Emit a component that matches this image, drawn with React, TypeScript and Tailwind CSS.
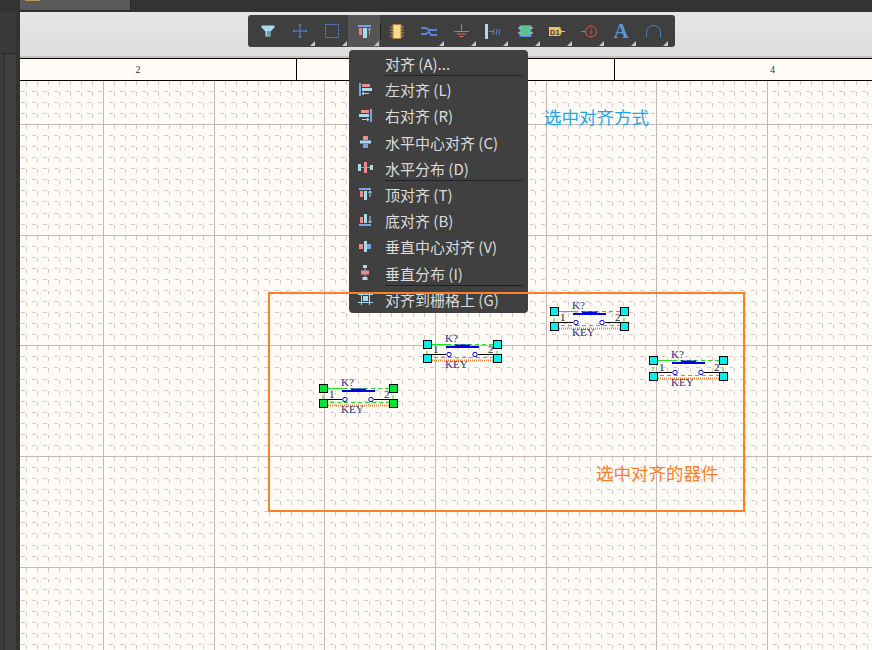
import React from 'react';

const FONT = { fontFamily: '"Noto Sans CJK SC", "Liberation Sans", sans-serif' };

const Corner = () => (
  <span className="absolute right-[1px] bottom-[1px] w-0 h-0 border-l-[5px] border-l-transparent border-b-[5px] border-b-[#c8c8c8]" />
);

const paletteIcons: { icon: React.ReactNode; corner: boolean; active?: boolean }[] = [
  {
    corner: false,
    icon: (
      <svg width="14" height="12" viewBox="0 0 14 12">
        <path d="M0.5 0.5h13v2l-4 4v5h-5v-5l-4-4z" fill="#a8dcec" />
        <path d="M6 6h3v5H6z" fill="#5f9db5" />
      </svg>
    ),
  },
  {
    corner: true,
    icon: (
      <svg width="14" height="14" viewBox="0 0 14 14">
        <path d="M7 0v14M0 7h14" stroke="#5b84d8" strokeWidth="1" fill="none" />
        <path d="M5.5 1h3M5.5 13h3M1 5.500v3M13 5.500v3" stroke="#5b84d8" strokeWidth="1" fill="none" />
      </svg>
    ),
  },
  {
    corner: true,
    icon: (
      <svg width="14" height="14" viewBox="0 0 14 14">
        <rect x="0.5" y="0.5" width="13" height="13" fill="none" stroke="#5b84d8" strokeDasharray="2 1" />
      </svg>
    ),
  },
  {
    corner: true,
    active: true,
    icon: (
      <svg width="13" height="13" viewBox="0 0 13 13">
        <path d="M0 0h13v2H0z" fill="#79a6e0" />
        <path d="M1 3h3v7H1z" fill="#ef7f7f" />
        <path d="M5 3h4v10H5z" fill="#a8dcec" />
        <path d="M11.500 3v7M10 5l1.500-2 1.500 2" stroke="#79a6e0" fill="none" />
      </svg>
    ),
  },
  {
    corner: false,
    icon: (
      <svg width="14" height="15" viewBox="0 0 14 15">
        <rect x="3" y="0.5" width="8" height="14" fill="#fbd98c" stroke="#a6843f" />
        <path d="M0 3h3M0 6h3M0 9h3M0 12h3M11 3h3M11 6h3M11 9h3M11 12h3" stroke="#b59a55" />
      </svg>
    ),
  },
  {
    corner: true,
    icon: (
      <svg width="16" height="11" viewBox="0 0 16 11">
        <path d="M0 2h5l3 2h8M0 8h5l3-2 2 3h6" stroke="#5b84d8" strokeWidth="2" fill="none" />
      </svg>
    ),
  },
  {
    corner: true,
    icon: (
      <svg width="15" height="14" viewBox="0 0 15 14">
        <path d="M7.500 0v7M0 7.500h15M3 10h9M5.500 12.500h4" stroke="#dc6a60" fill="none" />
      </svg>
    ),
  },
  {
    corner: true,
    icon: (
      <svg width="16" height="15" viewBox="0 0 16 15">
        <rect x="0" y="0" width="3" height="15" fill="#a8dcec" />
        <path d="M4 7.500h4M8 11l1-6M11 11l1-6M14 11l1-6" stroke="#5b84d8" fill="none" />
      </svg>
    ),
  },
  {
    corner: true,
    icon: (
      <svg width="15" height="12" viewBox="0 0 15 12">
        <rect x="2" y="0.500" width="11" height="11" fill="#5ec48a" stroke="#5b84d8" />
        <path d="M0 3h3M0 8h3M12 3h3M12 8h3" stroke="#cfe7f5" />
      </svg>
    ),
  },
  {
    corner: true,
    icon: (
      <svg width="16" height="9" viewBox="0 0 16 9">
        <path d="M0 0h11l2 4.500-2 4.500H0z" fill="#e6c25f" />
        <path d="M12 4.500h4" stroke="#e6c25f" />
        <text x="1" y="7.500" fontSize="7.500" fontWeight="bold" fill="#3d3d3d" style={{ fontFamily: '"Liberation Sans", sans-serif' }}>D1</text>
      </svg>
    ),
  },
  {
    corner: true,
    icon: (
      <svg width="16" height="13" viewBox="0 0 16 13">
        <circle cx="10" cy="6.500" r="5.500" fill="none" stroke="#dc5a5a" />
        <path d="M0 6.500h4M10 3v1M10 5.500v4" stroke="#dc5a5a" fill="none" />
      </svg>
    ),
  },
  {
    corner: true,
    icon: (
      <span className="text-[21px] leading-none font-bold text-[#5c95dc]" style={{ fontFamily: '"Liberation Serif", serif' }}>
        A
      </span>
    ),
  },
  {
    corner: true,
    icon: (
      <svg width="15" height="12" viewBox="0 0 15 12">
        <path d="M0.500 12V7.500a7 7 0 0 1 14 0V12" fill="none" stroke="#4c7fc0" />
      </svg>
    ),
  },
];

const AlignIcon = ({ name }: { name: string }) => {
  const blue = '#79a6e0';
  const pink = '#ef8a8a';
  const cyan = '#a8dcec';
  switch (name) {
    case 'left':
      return (
        <svg width="13" height="13" viewBox="0 0 13 13">
          <rect x="0" y="0" width="2" height="13" fill={blue} />
          <rect x="3" y="1" width="8" height="3" fill={pink} />
          <rect x="3" y="5" width="10" height="3" fill={cyan} />
          <path d="M3 10.500h7M5 9l-2 1.500 2 1.500" stroke={cyan} fill="none" />
        </svg>
      );
    case 'right':
      return (
        <svg width="13" height="13" viewBox="0 0 13 13">
          <rect x="11" y="0" width="2" height="13" fill={blue} />
          <rect x="2" y="1" width="8" height="3" fill={pink} />
          <rect x="0" y="5" width="10" height="3" fill={cyan} />
          <path d="M3 10.500h7M8 9l2 1.500-2 1.500" stroke={cyan} fill="none" />
        </svg>
      );
    case 'hcenter':
      return (
        <svg width="11" height="12" viewBox="0 0 11 12">
          <rect x="3" y="0" width="5" height="4" fill={pink} />
          <rect x="0" y="4.500" width="11" height="3" fill={cyan} />
          <rect x="3" y="8" width="5" height="4" fill={blue} />
        </svg>
      );
    case 'hdist':
      return (
        <svg width="15" height="11" viewBox="0 0 15 11">
          <rect x="0" y="2" width="3" height="7" fill={cyan} />
          <rect x="6" y="0" width="3" height="11" fill={pink} />
          <rect x="12" y="3" width="3" height="5" fill={cyan} />
          <path d="M3 5.500h3M9 5.500h3" stroke={blue} />
        </svg>
      );
    case 'top':
      return (
        <svg width="13" height="12" viewBox="0 0 13 12">
          <rect x="0" y="0" width="12" height="2" fill={blue} />
          <rect x="1" y="3" width="3" height="6" fill={pink} />
          <rect x="5" y="3" width="3" height="9" fill={cyan} />
          <path d="M11 3v6M9.500 5l1.500-2 1.500 2" stroke={cyan} fill="none" />
        </svg>
      );
    case 'bottom':
      return (
        <svg width="13" height="12" viewBox="0 0 13 12">
          <rect x="0" y="10" width="12" height="2" fill={blue} />
          <rect x="1" y="3" width="3" height="6" fill={pink} />
          <rect x="5" y="0" width="3" height="9" fill={cyan} />
          <path d="M11 2v7M9.500 7l1.500 2 1.500-2" stroke={cyan} fill="none" />
        </svg>
      );
    case 'vcenter':
      return (
        <svg width="12" height="11" viewBox="0 0 12 11">
          <rect x="0" y="3" width="4" height="5" fill={pink} />
          <rect x="5" y="0" width="3" height="11" fill={cyan} />
          <rect x="8" y="3" width="4" height="5" fill={blue} />
        </svg>
      );
    case 'vdist':
      return (
        <svg width="8" height="15" viewBox="0 0 8 15">
          <rect x="2" y="0" width="4" height="3" fill={cyan} />
          <rect x="0" y="5.500" width="8" height="4" fill={pink} />
          <rect x="1.500" y="12" width="5" height="3" fill={cyan} />
          <path d="M4 3v3M4 9v3" stroke={blue} />
        </svg>
      );
    case 'grid':
      return (
        <svg width="15" height="13" viewBox="0 0 15 13">
          <path d="M0 2.500h15M0 10.500h15M3.500 0v13M11.500 0v13" stroke={cyan} fill="none" />
          <rect x="5" y="4" width="5" height="5" fill={cyan} />
        </svg>
      );
    default:
      return null;
  }
};

const menuItems = [
  { label: '对齐 (A)...', icon: '', sep: true },
  { label: '左对齐 (L)', icon: 'left' },
  { label: '右对齐 (R)', icon: 'right' },
  { label: '水平中心对齐 (C)', icon: 'hcenter' },
  { label: '水平分布 (D)', icon: 'hdist', sep: true },
  { label: '顶对齐 (T)', icon: 'top' },
  { label: '底对齐 (B)', icon: 'bottom' },
  { label: '垂直中心对齐 (V)', icon: 'vcenter' },
  { label: '垂直分布 (I)', icon: 'vdist', sep: true },
  { label: '对齐到栅格上 (G)', icon: 'grid' },
];

const SwitchPart = ({ x, y, h, handle }: { x: number; y: number; h: number; handle: string }) => {
  // x, y are the centre of the top-left handle
  const b = h;
  return (
    <svg
      className="absolute overflow-visible"
      style={{ left: x, top: y }}
      width="70"
      height={h}
      viewBox={`0 0 70 ${h}`}
    >
      <path d={`M0 0.500h20`} stroke="#22e022" />
      <path d={`M20 0.500h50M70 0v${b}M0 0v${b}M0 ${b - 0.5}h70`} stroke="#22e022" strokeDasharray="4 3" fill="none" />
      <path d={`M3 ${b + 2.500}h64`} stroke="#f08a3c" strokeWidth="2" strokeDasharray="1 1" />
      <rect x="19" y="2" width="33" height="2" fill="#0000e0" />
      <rect x="28" y="0.500" width="15" height="2" fill="#0000e0" />
      <path d={`M0 ${b - 3.500}h19M51 ${b - 3.500}h19`} stroke="#000" />
      <circle cx="22" cy={b - 3.500} r="2.200" fill="#fff" stroke="#0000e0" />
      <circle cx="48" cy={b - 3.500} r="2.200" fill="#fff" stroke="#0000e0" />
      <g style={{ fontFamily: '"Liberation Serif", serif' }} fontSize="11">
        <text x="18" y="-2" fill="#2a2a86">K?</text>
        <text x="6" y={b - 5} fill="#222">1</text>
        <text x="61" y={b - 5} fill="#222">2</text>
        <text x="18" y={b + 10} fill="#2a2a86">KEY</text>
      </g>
      {[
        [0, 0],
        [70, 0],
        [0, b],
        [70, b],
      ].map(([cx, cy], i) => (
        <rect key={i} x={cx - 3.500} y={cy - 3.500} width="8" height="8" fill={handle} stroke="#000" />
      ))}
    </svg>
  );
};

// sheet grid: major line every 10th step, steps are 11.067px apart
const GRID_W = 852;
const GRID_H = 569;
const STEP = 11.067;
const xSteps = Array.from({ length: 80 }, (_, i) => i - 8);
const ySteps = Array.from({ length: 55 }, (_, i) => i - 4);

const GridBackground = () => (
  <svg className="absolute left-0 top-0" width={GRID_W} height={GRID_H} shapeRendering="crispEdges">
    {xSteps.map((n) => {
      const px = Math.round(83 + n * STEP) + 0.5;
      const major = n % 10 === 0;
      return (
        <line
          key={`v${n}`}
          x1={px}
          x2={px}
          y1={major ? 0 : 43 - 44.268 + 1}
          y2={GRID_H}
          stroke={major ? '#c6b6ba' : '#dcc6ca'}
          strokeDasharray={major ? undefined : `4 ${STEP - 4}`}
        />
      );
    })}
    {ySteps.map((n) => {
      const py = Math.round(43 + n * STEP) + 0.5;
      const major = n % 10 === 0;
      return (
        <line
          key={`h${n}`}
          y1={py}
          y2={py}
          x1={major ? 0 : 83 - 88.536 - 5}
          x2={GRID_W}
          stroke={major ? '#c6b6ba' : '#dcc6ca'}
          strokeDasharray={major ? undefined : `4 ${STEP - 4}`}
        />
      );
    })}
  </svg>
);

export default function App() {
  return (
    <div className="relative w-[872px] h-[650px] overflow-hidden flex flex-col bg-[#333333]" style={FONT}>
      {/* tab strip */}
      <div className="h-[12px] shrink-0 flex bg-[#333333] overflow-hidden">
        <div className="ml-[20px] w-[111px] h-[11px] bg-[#595959] border-r border-b border-[#2a2a2a] overflow-hidden flex items-start pl-[5px] gap-[7px]">
          <span className="w-[15px] h-[1px] bg-[#b09a5c] shrink-0" />
          <span className="text-[14px] leading-[16px] -mt-[14px] text-white whitespace-nowrap" style={{ fontFamily: '"Liberation Sans", sans-serif' }}>tomato300</span>
        </div>
      </div>

      <div className="flex-1 flex min-h-0">
        {/* left dock edge */}
        <div className="w-[20px] shrink-0 flex flex-col bg-[#333333]">
          <div className="h-[41px] w-[16px] bg-[#3a3a3a]" />
          <div className="flex-1 w-[16px] flex bg-[#404040] border-t border-[#2a2a2a]">
            <div className="w-[5px] bg-[#3a3a3a] border-r border-[#2a2a2a]" />
          </div>
        </div>

        <div className="flex-1 flex flex-col min-w-0">
          {/* toolbar band */}
          <div className="h-[46px] shrink-0 bg-gradient-to-b from-[#e6e6e6] to-[#dddddd] border-b-2 border-[#c4c4c4] flex pl-[228px]">
            <div className="mt-[3px] h-[32px] w-[427px] shrink-0 rounded-[3px] bg-[#3f3f3f] flex pl-[4px]">
              {paletteIcons.map((p, i) => (
                <React.Fragment key={i}>
                  <div className={`relative w-[32px] h-[32px] flex items-center justify-center ${p.active ? 'bg-[#555555]' : ''}`}>
                    {p.icon}
                    {p.corner && <Corner />}
                  </div>
                  {i === 3 && <div className="w-[1px] my-[8px] bg-[#1e1e1e]" />}
                </React.Fragment>
              ))}
            </div>
          </div>

          {/* sheet ruler */}
          <div className="h-[23px] shrink-0 bg-[#fffcf7] border-t border-b border-black grid grid-cols-[277px_318px_1fr] text-[10px] text-[#333333]" style={{ fontFamily: '"Liberation Serif", serif' }}>
            <div className="border-r border-black flex items-center justify-center pr-[40px]">2</div>
            <div className="border-r border-black flex items-center justify-center">3</div>
            <div className="flex items-center justify-center pl-[58px]">4</div>
          </div>

          {/* sheet */}
          <div className="relative flex-1 bg-[#fffcf7]">
            <GridBackground />
          </div>
        </div>
      </div>

      {/* parts on the sheet */}
      <SwitchPart x={322.500} y={388} h={15} handle="#00e632" />
      <SwitchPart x={427} y={344} h={14} handle="#00f0f0" />
      <SwitchPart x={554} y={311} h={15} handle="#00f0f0" />
      <SwitchPart x={653} y={360} h={16} handle="#00f0f0" />

      {/* dropdown menu */}
      <div className="absolute left-[349px] top-[50px] w-[179px] h-[263px] rounded-[4px] bg-[#404040] text-[15px] leading-none text-[#dcdcdc]">
        {menuItems.map((item) => (
          <div key={item.label} className="relative h-[26.200px] flex items-center">
            <div className="w-[32px] mr-[4px] flex justify-center shrink-0">{item.icon && <AlignIcon name={item.icon} />}</div>
            <span className="whitespace-nowrap pt-[1px]">{item.label}</span>
            {item.sep && <div className="absolute left-[36px] right-[5px] bottom-0 h-[1px] bg-[#222222]" />}
          </div>
        ))}
      </div>

      {/* annotation */}
      <div className="absolute left-[268px] top-[292px] w-[477px] h-[220px] border-2 border-[#ff7f27]" />
      <span className="absolute left-[544px] top-[106px] text-[17.500px] leading-[22px] text-[#1ea5e6]">选中对齐方式</span>
      <span className="absolute left-[596px] top-[462px] text-[17.500px] leading-[22px] text-[#ff7f27]">选中对齐的器件</span>
    </div>
  );
}
